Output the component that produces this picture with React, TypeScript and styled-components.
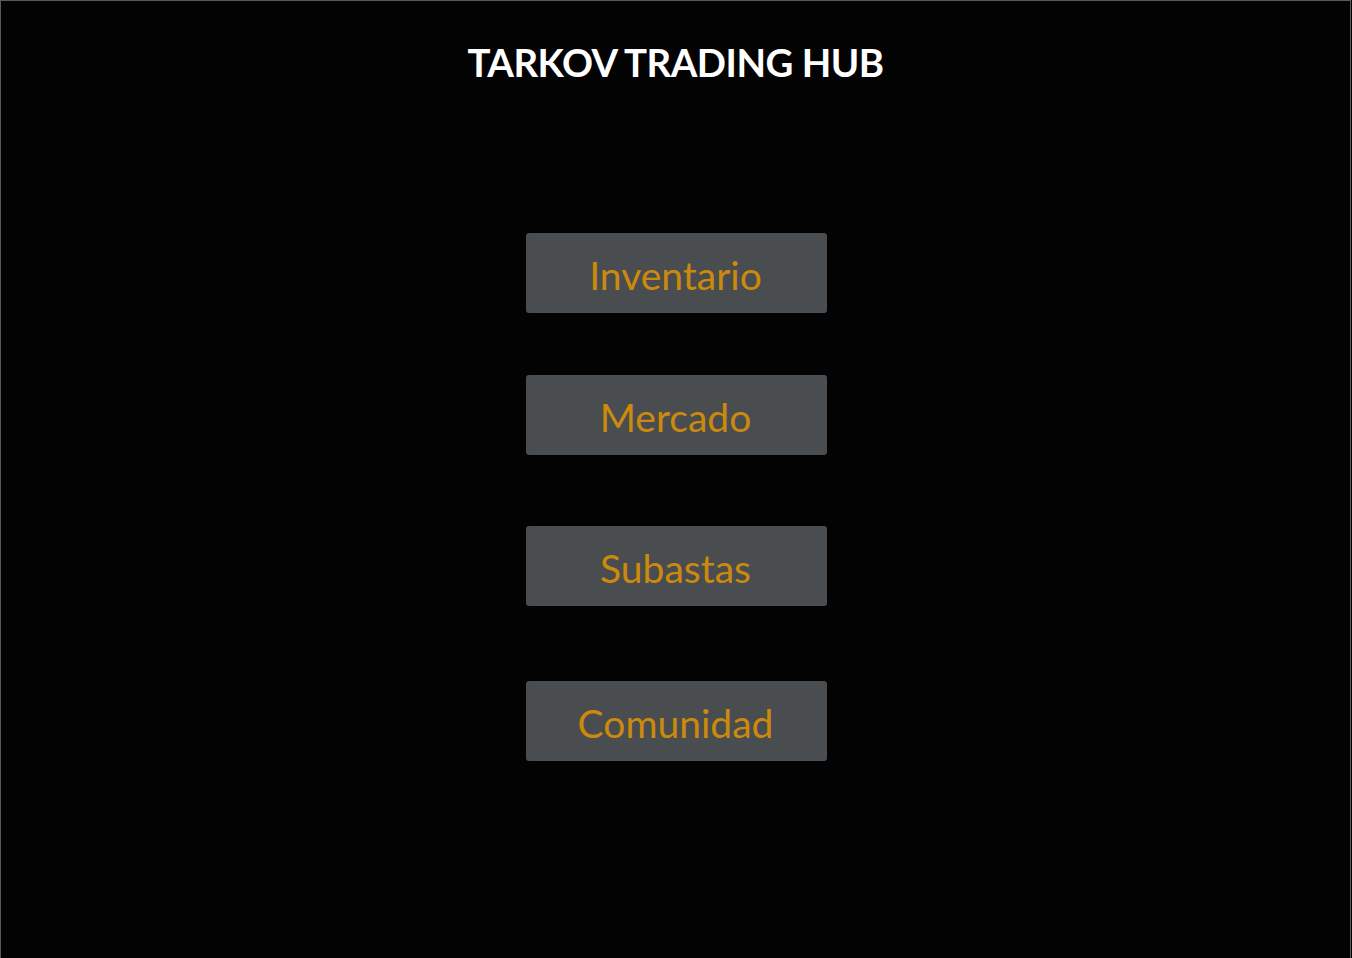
import React from "react";
import styled, { createGlobalStyle } from "styled-components";

const GlobalStyle = createGlobalStyle`
  html, body {
    margin: 0;
    padding: 0;
    background: #000;
  }
  body {
    font-family: Lato, "Liberation Sans", sans-serif;
  }
`;

const menuItems = [
  { label: "Inventario", gap: 0 },
  { label: "Mercado", gap: 62 },
  { label: "Subastas", gap: 71 },
  { label: "Comunidad", gap: 75 },
];

const App: React.FC = () => {
  return (
    <>
      <GlobalStyle />
      <Frame>
        <Title>TARKOV TRADING HUB</Title>
        <Menu>
          {menuItems.map((item) => (
            <MenuButton key={item.label} $gap={item.gap}>
              {item.label}
            </MenuButton>
          ))}
        </Menu>
      </Frame>
    </>
  );
};

export default App;

const Frame = styled.div`
  box-sizing: border-box;
  width: 1351px;
  min-height: 980px;
  background: #030303;
  border: 1px solid #5a5a5c;
  border-bottom: none;
  display: flex;
  flex-direction: column;
  align-items: center;
`;

const Title = styled.h1`
  margin: 38px 0 0;
  font-family: Lato, "Liberation Sans", sans-serif;
  font-weight: 700;
  font-size: 38.4px;
  line-height: 46px;
  letter-spacing: -0.5px;
  color: #fff;
`;

const Menu = styled.div`
  margin-top: 148px;
  padding-left: 2px;
  display: flex;
  flex-direction: column;
  align-items: center;
`;

const MenuButton = styled.button<{ $gap: number }>`
  margin-top: ${(p) => p.$gap}px;
  box-sizing: border-box;
  width: 301px;
  height: 80px;
  padding: 4px 2px 0 0;
  border: none;
  border-radius: 3px;
  background: #4a4d50;
  color: #cc8a0c;
  font-family: Lato, "Liberation Sans", sans-serif;
  font-size: 39px;
  font-weight: 400;
  cursor: pointer;
`;
